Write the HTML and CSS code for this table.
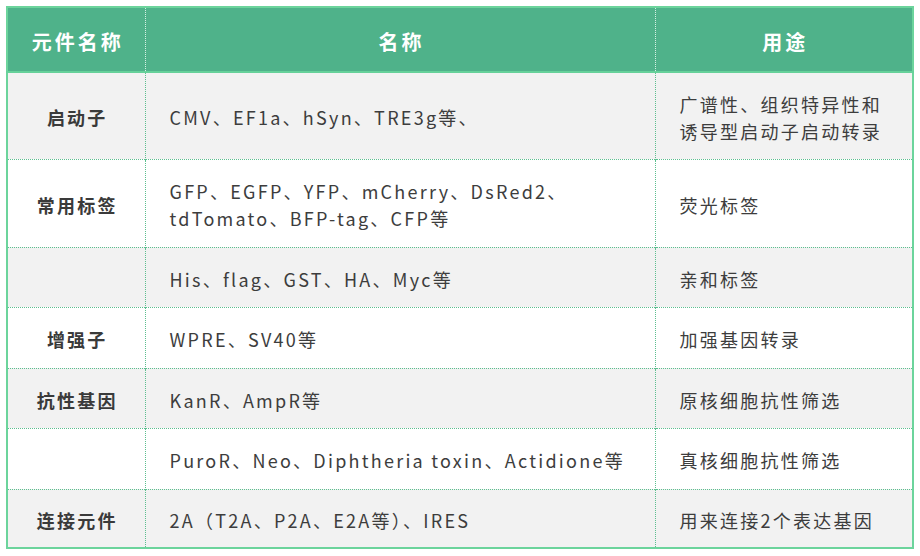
FILE: index.html
```html
<!DOCTYPE html>
<html lang="zh-CN">
<head>
<meta charset="utf-8">
<link rel="stylesheet" href="styles.css">
</head>
<body>
<table class="parts">
  <colgroup>
    <col class="c1"><col class="c2"><col class="c3">
  </colgroup>
  <thead>
    <tr class="head">
      <th>元件名称</th>
      <th>名称</th>
      <th>用途</th>
    </tr>
  </thead>
  <tbody>
    <tr class="grey h87">
      <td class="kind">启动子</td>
      <td>CMV、EF1a、hSyn、TRE3g等、</td>
      <td>广谱性、组织特异性和<br>诱导型启动子启动转录</td>
    </tr>
    <tr class="white h88">
      <td class="kind">常用标签</td>
      <td>GFP、EGFP、YFP、mCherry、DsRed2、<br>tdTomato、BFP-tag、CFP等</td>
      <td>荧光标签</td>
    </tr>
    <tr class="grey h60">
      <td class="kind"></td>
      <td>His、flag、GST、HA、Myc等</td>
      <td>亲和标签</td>
    </tr>
    <tr class="white h61">
      <td class="kind">增强子</td>
      <td>WPRE、SV40等</td>
      <td>加强基因转录</td>
    </tr>
    <tr class="grey h60">
      <td class="kind">抗性基因</td>
      <td>KanR、AmpR等</td>
      <td>原核细胞抗性筛选</td>
    </tr>
    <tr class="white h61">
      <td class="kind"></td>
      <td>PuroR、Neo、Diphtheria toxin、Actidione等</td>
      <td>真核细胞抗性筛选</td>
    </tr>
    <tr class="grey h59">
      <td class="kind">连接元件</td>
      <td>2A（T2A、P2A、E2A等）、IRES</td>
      <td>用来连接2个表达基因</td>
    </tr>
  </tbody>
</table>
</body>
</html>
```

FILE: styles.css
```css
html, body {
  margin: 0;
  padding: 0;
  background: #ffffff;
}
body {
  padding: 6px 0 0 6px;
  font-family: "Noto Sans CJK SC", "Noto Sans", sans-serif;
  color: #3d3d3d;
}
.parts {
  border-collapse: collapse;
  border: 2px solid #6cd49c;
  width: 908px;
  table-layout: fixed;
}
.c1 { width: 138px; }
.c2 { width: 510px; }
.c3 { width: 258px; }

.parts th, .parts td {
  padding: 4px 0 0 24px;
  font-size: 18px;
  letter-spacing: 2.25px;
  line-height: 27px;
  vertical-align: middle;
  text-align: left;
}
.parts th + th, .parts td + td {
  border-left: 1px dotted #5cbf8f;
}
.parts tbody tr + tr td {
  border-top: 1px dotted #5cbf8f;
}
.head {
  height: 65px;
  background: #4fb28a;
  border-bottom: 2px solid #66d19a;
}
.parts th {
  color: #ffffff;
  font-weight: 700;
  text-align: center;
  padding: 4px 0 0 3px;
  font-size: 20px;
  letter-spacing: 3px;
}
.parts th + th {
  border-left: 1px dotted #d8f0e4;
}
.parts td.kind {
  font-weight: 700;
  text-align: center;
  padding: 4px 0 0 2px;
  color: #3a3a3a;
}
.grey { background: #f2f2f2; }
.white { background: #ffffff; }
.h87 { height: 87px; }
.h88 { height: 88px; }
.h60 { height: 60px; }
.h61 { height: 61px; }
.h59 { height: 59px; }
```
